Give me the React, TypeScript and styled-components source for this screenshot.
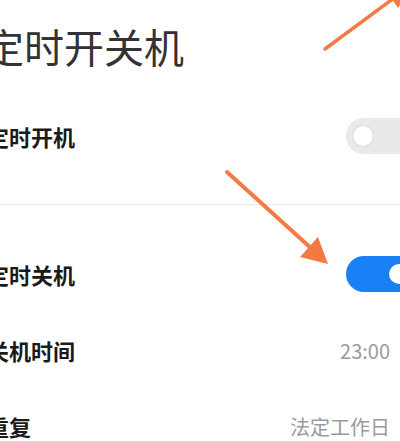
import styled, { createGlobalStyle } from 'styled-components'

const GlobalStyle = createGlobalStyle`
  html, body {
    margin: 0;
    padding: 0;
    background: #ffffff;
  }
  body {
    font-family: 'Noto Sans CJK SC', 'Noto Sans', sans-serif;
  }
`

const Screen = styled.div`
  position: relative;
  width: 400px;
  height: 441px;
  overflow: hidden;
  background: #ffffff;
`

const Content = styled.div`
  display: flex;
  flex-direction: column;
  width: 429px;
  margin-left: -13px;
`

const Title = styled.h1`
  display: flex;
  align-items: center;
  height: 91px;
  margin: 0 0 0 -3px;
  font-size: 40px;
  font-weight: 400;
  color: #333333;
`

const Group = styled.div<{ $divider?: boolean; $top?: number }>`
  display: flex;
  flex-direction: column;
  padding-top: ${(p) => p.$top ?? 0}px;
  padding-bottom: ${(p) => (p.$divider ? 30 : 0)}px;
  border-bottom: ${(p) => (p.$divider ? '1px solid #e8e8e8' : 'none')};
`

const Row = styled.div`
  display: flex;
  align-items: center;
  justify-content: space-between;
  height: 76px;
`

const Label = styled.span`
  font-size: 22px;
  font-weight: 600;
  color: #1a1a1a;
`

const Value = styled.span`
  margin-right: 26px;
  font-size: 20px;
  color: #9a9a9a;
`

const Track = styled.div<{ $on: boolean }>`
  display: flex;
  align-items: center;
  justify-content: ${(p) => (p.$on ? 'flex-end' : 'flex-start')};
  box-sizing: border-box;
  width: 70px;
  height: 36px;
  padding: 0 7px;
  border-radius: 18px;
  background: ${(p) => (p.$on ? '#1a80f6' : '#e9e9e9')};
`

const Knob = styled.div`
  width: 20px;
  height: 20px;
  border-radius: 50%;
  background: #ffffff;
  box-shadow: 0 0 0 1px rgba(0, 0, 0, 0.06);
`

const Overlay = styled.svg`
  position: absolute;
  left: 0;
  top: 0;
  pointer-events: none;
`

const Switch = ({ on }: { on: boolean }) => (
  <Track $on={on}>
    <Knob />
  </Track>
)

const ARROW = '#f47a45'

export default function App() {
  return (
    <>
      <GlobalStyle />
      <Screen>
        <Content>
          <Title>定时开关机</Title>
          <Group $divider $top={7}>
            <Row>
              <Label>定时开机</Label>
              <Switch on={false} />
            </Row>
          </Group>
          <Group $top={31}>
            <Row>
              <Label>定时关机</Label>
              <Switch on />
            </Row>
            <Row>
              <Label>关机时间</Label>
              <Value>23:00</Value>
            </Row>
            <Row>
              <Label>重复</Label>
              <Value>法定工作日</Value>
            </Row>
          </Group>
        </Content>
        <Overlay width="400" height="441" viewBox="0 0 400 441">
          <line x1="325" y1="49" x2="394" y2="-2" stroke={ARROW} strokeWidth="3.5" strokeLinecap="round" />
          <polygon points="412,-15 398,8 386,-10" fill={ARROW} />
          <line x1="227" y1="172" x2="312" y2="249" stroke={ARROW} strokeWidth="4" strokeLinecap="round" />
          <polygon points="328,264 300,257 318,237" fill={ARROW} />
        </Overlay>
      </Screen>
    </>
  )
}
